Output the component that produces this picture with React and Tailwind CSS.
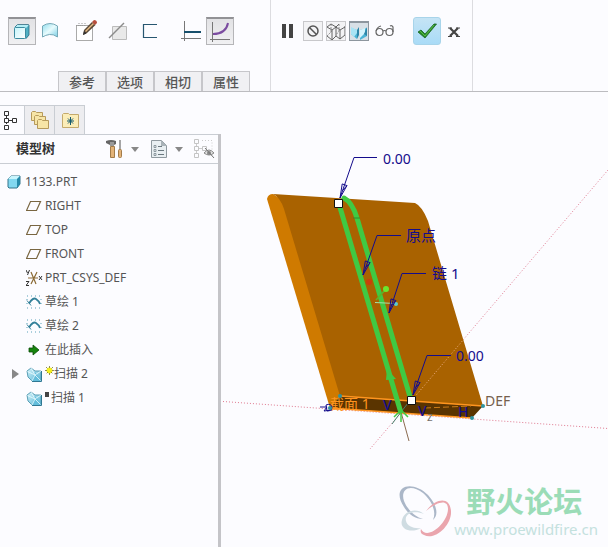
function Icon({ size = 20, children }) {
  return (
    <svg width={size} height={size} viewBox={`0 0 ${size} ${size}`} fill="none" aria-hidden="true" className="shrink-0">
      {children}
    </svg>
  )
}

const SolidIcon = () => (
  <Icon size={24}>
    <defs>
      <linearGradient id="solid" x1="0" y1="0" x2="1" y2="1">
        <stop offset="0" stopColor="#c4f4fa" />
        <stop offset="1" stopColor="#fff" />
      </linearGradient>
    </defs>
    <path d="M4 8l3-3h12v10l-3 4z" fill="#4fb0c4" />
    <path d="M4 8l3-3h12l-3 3z" fill="#b4eef6" />
    <rect x="4.500" y="7.500" width="11" height="11" rx="1" fill="url(#solid)" stroke="#3c8ba0" />
    <path d="M5 7l2.500-2.500h11L19 5v10l-3 3.500" stroke="#2a6a80" strokeWidth=".8" />
  </Icon>
)

const SurfaceIcon = () => (
  <Icon size={20}>
    <defs>
      <linearGradient id="surface" x1="0" x2="1" y2="1">
        <stop offset="0" stopColor="#8fdced" />
        <stop offset=".5" stopColor="#e8fbfd" />
        <stop offset="1" stopColor="#79cde4" />
      </linearGradient>
    </defs>
    <path d="M2.500 5q7.500-5 15 0v11q-4-3-8-2.500-4 .5-7 2.500z" fill="url(#surface)" stroke="#76a9b8" />
  </Icon>
)

const SketchIcon = () => (
  <Icon size={24}>
    <rect x="2.500" y="6.500" width="16" height="15" fill="#fff" stroke="#aaa" />
    <path d="M2 6.500h10M5 4v4M8 4v4M11 4v4" stroke="#999" strokeDasharray="1 1" />
    <path d="M9 16l1-5 8-8 3.500 3-8.500 8z" fill="#5a4936" />
    <path d="M11 12l8-8 1 1-8 8z" fill="#e5ba83" />
    <path d="M18 3l2-2q3 0 3 3l-2 2z" fill="#b84e3d" />
    <path d="M9 16l1-4 2.500 2.500z" fill="#333" />
  </Icon>
)

const RemoveIcon = () => (
  <Icon size={20}>
    <path d="M4.500 5.500h14v13h-14z" fill="#e9e9e9" stroke="#bbb" />
    <path d="M1 17L16 2" stroke="#8b8b8b" strokeWidth="1.400" />
  </Icon>
)

const ThinIcon = () => (
  <Icon size={18}>
    <path d="M16 2.500H2.500v13H16" stroke="#275670" strokeWidth="1.200" />
  </Icon>
)

const ConstantIcon = () => (
  <Icon size={24}>
    <path d="M4.500 2v20M1 19.500h20" stroke="#777" />
    <path d="M4 13h17" stroke="#174f6c" strokeWidth="2" />
  </Icon>
)

const VariableIcon = () => (
  <Icon size={24}>
    <path d="M4.500 2v20M2 19.500h20" stroke="#777" />
    <path d="M5 14Q18 14 20 3" stroke="#7b4ca0" strokeWidth="2" />
  </Icon>
)

const WireIcon = () => (
  <Icon size={20}>
    <path d="M1 6l4-3 5 3v9l-4 4-5-4M1 6l5 3 4-3 3-3M10 6l4 3 5-3M6 9v9M14 9v9l5-4V5M10 15l4 3" stroke="#555" strokeWidth=".9" />
    <path d="M1 15l5-5M13 3v7l-3 4M5 3v8" stroke="#777" strokeWidth=".8" strokeDasharray="2 1" />
  </Icon>
)

const AttachedIcon = () => (
  <Icon size={18}>
    <path d="M1 5l6 2 0 9-6-5zM10 7l7-2v8l-7 4z" fill="#4bb4d6" />
    <path d="M1 4l6 3v3l-3 4-3-3z" fill="#a8e4f5" />
    <path d="M10 7l5-2v5l-5 5z" fill="#d3f4fd" />
    <path d="M7 16V7l2-3v8z" fill="#2e86a8" />
    <path d="M17 4v9l-3-2z" fill="#2e86a8" />
  </Icon>
)

const GlassesIcon = () => (
  <Icon size={20}>
    <circle cx="4.500" cy="11" r="3.500" stroke="#666" strokeWidth="1.200" />
    <circle cx="14.500" cy="11" r="3.500" stroke="#666" strokeWidth="1.200" />
    <path d="M1.200 10Q2 6 6 5M8 10q1.500-1 3 0M18 11V6q-1-2-3-1" stroke="#666" strokeWidth="1.200" />
  </Icon>
)

const CheckIcon = () => (
  <Icon size={22}>
    <path d="M2 12l3-2 4 4L18 4h2.500L9 18z" fill="#268c28" stroke="#196424" strokeWidth=".8" />
    <path d="M4 11l5 5 9-11" stroke="#5bba46" />
  </Icon>
)

const TreeIcon = () => (
  <Icon size={20}>
    <path d="M6.500 6v2M6.500 12v2M9 10.500h4" stroke="#333" />
    <path d="M4.500 1.500h4v4h-4zM4.500 8.500h4v4h-4zM4.500 15.500h4v4h-4zM12.500 8.500h4v4h-4z" stroke="#333" />
  </Icon>
)

const FoldersIcon = () => (
  <Icon size={20}>
    <g fill="#f7e5a6" stroke="#b69a5b">
      <path d="M1.500 2.500l1-1h3l1 1h6v8h-11z" />
      <path d="M4.500 6.500l1-1h3l1 1h6v8h-11z" />
      <path d="M7.500 10.500l1-1h3l1 1h6v8h-11z" />
    </g>
  </Icon>
)

const FavoritesIcon = () => (
  <Icon size={20}>
    <path d="M2.500 4.500l1-1h5l1 1h9v13h-16z" fill="#fbedb8" stroke="#c4aa6c" />
    <path d="M10.500 7v8M7 11h7M8 8.500l5 5M13 8.500l-5 5" stroke="#135a6e" />
  </Icon>
)

const ToolsIcon = () => (
  <Icon size={20}>
    <path d="M5.500 7.500h4v11h-4z" fill="#e3b378" stroke="#a37c4a" />
    <path d="M1 2q5-2 10 0v3l-2 1H5L1 4z" fill="#666" />
    <path d="M5 3h4v4H5z" fill="#999" />
    <path d="M15 1v10" stroke="#888" strokeWidth="1.500" />
    <rect x="13.500" y="10.500" width="3" height="8" rx="1" fill="#e3b378" stroke="#a37c4a" />
  </Icon>
)

const SettingsIcon = () => (
  <Icon size={20}>
    <path d="M2.500 1.500h10l5 5v12h-15z" fill="#e9eff2" stroke="#8f999f" />
    <path d="M12 1v6h6z" fill="#a9b3b8" />
    <path d="M9 7.500h4M9 11.500h6M9 15.500h6" stroke="#6b787f" />
    <path d="M5 6.500h2v2H5zM5 10.500h2v2H5zM5 14.500h2v2H5z" stroke="#7b888f" strokeWidth=".8" />
  </Icon>
)

const FilterIcon = () => (
  <Icon size={22}>
    <path d="M3.500 5v4M3.500 13v3M6 10.500h4" stroke="#ccc" />
    <path d="M1.500 1.500h4v4h-4zM1.500 8.500h4v4h-4zM1.500 15.500h4v4h-4zM9.500 8.500h4v4h-4z" stroke="#c4c4c4" />
    <path d="M9 2.500h10v16" stroke="#ccc" strokeDasharray="1 2" />
    <path d="M11 15q5-6 10 0-5 4-10 0z" fill="#ddd" stroke="#888" />
    <circle cx="16" cy="15" r="2" fill="#888" />
    <path d="M12 10l9 10" stroke="#777" />
  </Icon>
)

const PartIcon = () => (
  <Icon size={14}>
    <path d="M1 4l3-3h9v8l-3 4H2l-1-1z" fill="#82d8f0" stroke="#34758b" />
    <path d="M1 4l3-3h9l-3 3z" fill="#c8f5fd" />
    <path d="M10 4l3-3v8l-3 4z" fill="#268aa9" />
  </Icon>
)

const PlaneIcon = () => (
  <Icon size={16}>
    <path d="M4.500 3.500h10l-4 9h-10z" stroke="#796641" strokeWidth="1.200" />
  </Icon>
)

const CsysIcon = () => (
  <svg width="18" height="16" viewBox="0 0 18 16" fill="none" aria-hidden="true" className="-mr-1 shrink-0">
    <path d="M2 8h10M5 2l5 12M11 2L5 14" stroke="#8b6b36" strokeWidth="1.200" />
    <path d="M0 0l1.500 3M3.500 0L1.500 5M0 11.500h3L0 15.500h3M13 6l3 4M16 6l-3 4" stroke="#333" />
  </svg>
)

const CurveIcon = () => (
  <Icon size={16}>
    <path d="M1 2h14M1 14h14M1 5v6M15 5v6" stroke="#58a1b9" strokeDasharray="1 3" />
    <path d="M3 9.500Q7 3 10 5t4 5" stroke="#338099" strokeWidth="1.800" />
    <path d="M1 6.500l4 5" stroke="#338099" />
  </Icon>
)

const InsertIcon = () => (
  <Icon size={16}>
    <path d="M3 6h4V3l6 5-6 5v-3H3z" fill="#16840c" stroke="#0b4c08" strokeWidth=".8" />
  </Icon>
)

const SweepIcon = () => (
  <Icon size={17}>
    <defs>
      <linearGradient id="sweep" x1="0" y1="0" x2="1" y2="1">
        <stop offset="0" stopColor="#d6f4fb" />
        <stop offset="1" stopColor="#55b4d4" />
      </linearGradient>
    </defs>
    <path d="M1 5l4-3 4 3h6v10H6L2 11z" fill="url(#sweep)" stroke="#5b9fb5" />
    <path d="M6 15l3-9 6 9z" fill="#63bddb" />
    <path d="M1.500 5.500L9 9M5 2l4 7M9 9l6-4M9 9l-3 6M9 9l5.500 5.500" stroke="#eefcff" strokeWidth=".8" />
    <path d="M15.500 5v10.500H6" stroke="#2f7893" />
  </Icon>
)

const treeRows = [
  { label: 'RIGHT', icon: PlaneIcon },
  { label: 'TOP', icon: PlaneIcon },
  { label: 'FRONT', icon: PlaneIcon },
  { label: 'PRT_CSYS_DEF', icon: CsysIcon },
  { label: '草绘 1', icon: CurveIcon },
  { label: '草绘 2', icon: CurveIcon },
  { label: '在此插入', icon: InsertIcon },
  { label: '扫描 2', icon: SweepIcon, mark: 'new', expandable: true },
  { label: '扫描 1', icon: SweepIcon, mark: 'hidden' },
]

function ToolButton({ label, active, className = '', children }) {
  const look = active ? 'border border-t-2 border-[#b5b5b8] border-t-[#929296] bg-linear-to-b from-[#e2e2e5] to-[#f0f0f2]' : ''
  return (
    <button type="button" aria-label={label} className={`flex size-7 shrink-0 items-center justify-center ${look} ${className}`}>
      {children}
    </button>
  )
}

function PreviewButton({ label, active, children }) {
  const look = active ? 'border-t-2 border-[#8d969e] bg-[#d8e0e6]' : 'border-[#c8c8cb] bg-[#f3f3f5]'
  return (
    <button type="button" aria-label={label} className={`flex size-5 shrink-0 items-center justify-center overflow-hidden border ${look}`}>
      {children}
    </button>
  )
}

function Ribbon() {
  return (
    <header className="flex h-[92px] border-b border-[#bcbcc0]">
      <div className="flex w-[271px] shrink-0 flex-col justify-between border-r border-[#dcdce0] pt-[17px]">
        <div className="flex pl-2">
          <ToolButton label="Solid" active><SolidIcon /></ToolButton>
          <ToolButton label="Surface"><SurfaceIcon /></ToolButton>
          <ToolButton label="Sketch" className="ml-2"><SketchIcon /></ToolButton>
          <ToolButton label="Remove material" className="ml-1"><RemoveIcon /></ToolButton>
          <ToolButton label="Thin" className="ml-1"><ThinIcon /></ToolButton>
          <ToolButton label="Constant section" className="ml-3.5"><ConstantIcon /></ToolButton>
          <ToolButton label="Variable section" active><VariableIcon /></ToolButton>
        </div>
        <nav className="flex pl-[58px]">
          {['参考', '选项', '相切', '属性'].map((tab) => (
            <button key={tab} type="button" className="h-5 w-12 border border-b-0 border-[#c6c6ca] bg-[#f0f0f3] text-[13px] leading-[18px] font-medium text-[#555]">
              {tab}
            </button>
          ))}
        </nav>
      </div>
      <div className="flex w-[202px] shrink-0 items-start border-r border-[#dcdce0] pt-[17px] pl-2">
        <div className="flex h-7 items-center">
          <button type="button" aria-label="Pause" className="mr-2 flex w-4 justify-center gap-[3px]">
            <span className="h-3.5 w-1 bg-[#444]" />
            <span className="h-3.5 w-1 bg-[#444]" />
          </button>
          <div className="flex gap-[3px]">
            <PreviewButton label="No preview">
              <Icon size={18}>
                <circle cx="9" cy="9" r="5" stroke="#555" strokeWidth="1.500" />
                <path d="M5.500 5.500l7 7" stroke="#555" strokeWidth="1.500" />
              </Icon>
            </PreviewButton>
            <PreviewButton label="Unattached"><WireIcon /></PreviewButton>
            <PreviewButton label="Attached" active><AttachedIcon /></PreviewButton>
          </div>
          <button type="button" aria-label="Verify" className="ml-1.5 w-5"><GlassesIcon /></button>
          <button type="button" aria-label="OK" className="ml-[18px] flex size-7 items-center justify-center rounded-[3px] border border-[#a8d4ea] bg-linear-to-b from-[#c5e4f5] to-[#a9dbf7]">
            <CheckIcon />
          </button>
          <button type="button" aria-label="Cancel" className="ml-1.5 pt-0.5">
            <Icon size={14}>
              <path d="M3 3l8 8M11 3l-8 8" stroke="#444" strokeWidth="2.200" />
              <path d="M1 3h4M9 3h4M1 11.500h4M9 11.500h4" stroke="#444" />
            </Icon>
          </button>
        </div>
      </div>
    </header>
  )
}

function Caret() {
  return <span className="size-0 border-x-4 border-t-[5px] border-x-transparent border-t-[#888]" />
}

function ModelTree() {
  return (
    <aside className="flex w-[221px] shrink-0 flex-col pt-[13px]">
      <div className="flex h-[29px]">
        <button type="button" aria-label="Model tree" className="flex w-[25px] items-center border-t border-r border-[#c9cdd3]"><TreeIcon /></button>
        <button type="button" aria-label="Folders" className="flex w-[30px] items-center justify-center border-t border-r border-[#c9cdd3] bg-[#ededf0]"><FoldersIcon /></button>
        <button type="button" aria-label="Favorites" className="flex w-[30px] items-center justify-center border-t border-r border-[#c9cdd3] bg-[#ededf0]"><FavoritesIcon /></button>
      </div>
      <div className="flex-1 border-r-[3px] border-[#c4c4c8]">
        <div className="flex h-[30px] items-center border-b border-[#c9cdd3]">
          <div className="flex h-full flex-1 items-center border-t border-[#c9cdd3] pl-4">
            <h2 className="w-[89px] text-[13px] font-bold text-[#333]">模型树</h2>
            <button type="button" aria-label="Tools" className="flex w-11 items-center gap-1.5"><ToolsIcon /><Caret /></button>
            <button type="button" aria-label="Settings" className="flex w-11 items-center gap-1.5"><SettingsIcon /><Caret /></button>
            <button type="button" aria-label="Filter"><FilterIcon /></button>
          </div>
        </div>
        <ul className="pt-1.5 text-xs text-[#555]">
          <li className="flex h-6 items-center gap-1 pl-[7px]">
            <PartIcon />
            1133.PRT
          </li>
          {treeRows.map(({ label, icon: RowIcon, mark, expandable }) => (
            <li key={label} className="flex h-6 items-center">
              <span className="flex w-[26px] shrink-0 pl-3">
                {expandable && (
                  <button type="button" aria-label="Expand" className="size-0 border-y-[5px] border-l-[7px] border-y-transparent border-l-[#888]" />
                )}
              </span>
              <span className="flex w-[19px] shrink-0"><RowIcon /></span>
              {mark === 'new' && (
                <svg width="9" height="16" viewBox="0 0 9 16" aria-hidden="true">
                  <circle cx="4.500" cy="4.500" r="3" fill="#f5f01c" />
                  <path d="M4.500 0v9M0 4.500h9M1 1l7 7M8 1L1 8" stroke="#77742c" strokeWidth=".8" strokeDasharray="2 5" />
                </svg>
              )}
              {mark === 'hidden' && <span className="mr-0.5 mb-2 h-[5px] w-1 bg-[#444]" />}
              {label}
            </li>
          ))}
        </ul>
      </div>
    </aside>
  )
}

// Leader line with a narrow open arrowhead at its tip
function Leader({ x, y, endX, tipX, tipY }) {
  const len = Math.hypot(x - tipX, y - tipY)
  const ux = (x - tipX) / len
  const uy = (y - tipY) / len
  const bx = tipX + ux * 14
  const by = tipY + uy * 14
  return (
    <g stroke="#140c8c" fill="none">
      <path d={`M${endX} ${y}H${x}L${tipX} ${tipY}`} />
      <path d={`M${tipX} ${tipY}L${bx - uy * 2.5} ${by + ux * 2.5}L${bx + uy * 2.5} ${by - ux * 2.5}Z`} />
      <path d={`M${tipX + ux * 8} ${tipY + uy * 8}L${bx - uy * 2.5} ${by + ux * 2.5}`} />
    </g>
  )
}

function Model() {
  return (
    <svg width="387" height="455" viewBox="221 92 387 455" fill="none" className="block shrink-0">
      <path d="M223 401.500L608 428.500M608 170L370 449" stroke="#e07a90" strokeDasharray="1 2" />

      {/* Swept solid */}
      <path d="M267 199q1-5 6-5l15 10 57 200-15 4z" fill="#cf7a00" />
      <path d="M273 194l142 9q7 3 13 18l55 185-143-10-56-187q-4-12-11-15z" fill="#a96200" />
      <path d="M340 396l143 10-11 12-142-10z" fill="#5a3400" />
      <path d="M340 396l143 10M330 408l142 10" stroke="#ff951f" strokeWidth="1.500" />
      <path d="M340 396l-10 12M425 408l46-2" stroke="#ca7b18" strokeDasharray="6 3" />
      <path d="M464 339L412 400" stroke="#efb088" strokeDasharray="1 2" />

      {/* Trajectories */}
      <circle cx="369" cy="282" r="3" fill="#cb3e0b" />
      <path d="M401 412l8 29" stroke="#8b6b50" />
      <path d="M401 412l-9 12M401 412l11-14" stroke="#48806c" />
      <path d="M339 204L401 413" stroke="#40c943" strokeWidth="5" />
      <path d="M344 198q8 4 13 20L411 400" stroke="#40c943" strokeWidth="5" strokeLinecap="round" />
      <path d="M353 218h7" stroke="#348a2a" />
      <path d="M387 369l-1 11 10-1z" fill="#40c943" />
      <path d="M394 417l7-7 7 7M401 408v14" stroke="#40c943" strokeWidth="1.500" />
      <path d="M386 289l-10 11" stroke="#5cb429" strokeWidth="1.500" />
      <path d="M375 302.500l20 1" stroke="#a4e2a8" />
      <circle cx="386" cy="289" r="3" fill="#6be72e" />
      <circle cx="396" cy="304" r="2" fill="#5ecbd0" />

      <Leader x={354} y={157.5} endX={377} tipX={340} tipY={198} />
      <Leader x={377} y={235.5} endX={401} tipX={363} tipY={275} />
      <Leader x={402} y={273.5} endX={426} tipX={389} tipY={313} />
      <Leader x={427} y={355.5} endX={451} tipX={413} tipY={395} />
      <g fill="#140c8c" fontSize="14">
        <text x="383" y="164">0.00</text>
        <text x="406" y="241" fontSize="15">原点</text>
        <text x="432" y="279" fontSize="15">链 1</text>
        <text x="456" y="361">0.00</text>
      </g>

      {/* Section annotations */}
      <text x="330" y="409" fontSize="14" fill="#ff951f">截面 1</text>
      <g fill="#140c8c" fontSize="14" className="font-medium">
        <text x="383" y="410">V</text>
        <text x="418" y="416">V</text>
        <text x="458" y="417">H</text>
      </g>
      <text x="427" y="421" fontSize="12" fill="#75706b">z</text>
      <text x="485" y="406" fontSize="14" fill="#75604d">DEF</text>
      <path d="M320 407h7l-3 4 8-1M326 405q5-2 6 2 0 4-5 4z" stroke="#140c8c" />
      <g fill="#2f93a0">
        <circle cx="340" cy="396" r="2" />
        <circle cx="330" cy="408" r="2" />
        <circle cx="483" cy="406" r="2" />
        <circle cx="472" cy="418" r="2" />
      </g>
      <path d="M334.500 199.500h8v8h-8zM407.500 396.500h8v8h-8z" fill="#fff" stroke="#111" />
    </svg>
  )
}

function Watermark() {
  return (
    <div className="absolute right-2.5 bottom-1.5 flex items-center">
      <svg width="58" height="58" viewBox="0 0 58 58" aria-hidden="true">
        <path fillRule="evenodd" fill="#abb7c8" d="M8 24C-6 3 16-4 32 12 41 22 43 32 37 37 41 28 35 17 27 10 14 0 4 6 8 18 11 26 19 34 27 36 19 36 12 31 8 24z" />
        <path fill="#eaa5ad" d="M30 28C41 14 54 14 55 28 56 42 39 58 28 52 25 51 24 49 25 46 31 58 52 40 52 26 52 16 42 18 30 28z" />
        <path fill="#cfdce2" d="M28 31C19 27 8 30 10 38 11 43 18 46 25 45 15 51 3 46 6 37 8 28 20 24 28 31z" />
      </svg>
      <div className="flex flex-col">
        <span className="pl-3 text-[29px] leading-[34px] font-bold text-[#9bdcb7]">野火论坛</span>
        <a href="http://www.proewildfire.cn" className="text-[15px] leading-5 text-[#c4e1de]">www.proewildfire.cn</a>
      </div>
    </div>
  )
}

export default function App() {
  return (
    <div className="flex min-h-screen flex-col bg-[#fcfcff] font-['Noto_Sans','Noto_Sans_CJK_SC',sans-serif]">
      <Ribbon />
      <main className="flex flex-1">
        <ModelTree />
        <section aria-label="Graphics" className="relative min-w-0 flex-1 overflow-hidden">
          <Model />
          <Watermark />
        </section>
      </main>
    </div>
  )
}
